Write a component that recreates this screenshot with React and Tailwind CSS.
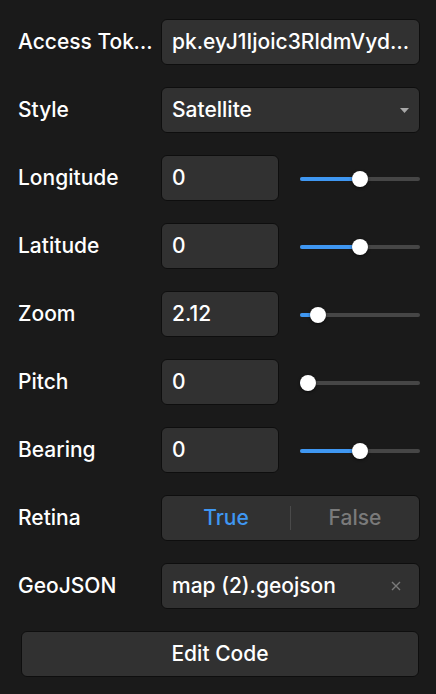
import React from "react";

const box =
  "h-[46px] rounded-[6px] border border-[#0e0e0e] bg-[#313131] text-white";

const Slider = ({ pct }) => (
  <div className="relative h-[46px] flex-1">
    <div className="absolute left-0 right-0 top-[22px] h-[4px] rounded-full bg-[#464646]" />
    <div
      className="absolute left-0 top-[22px] h-[4px] rounded-full bg-[#3f97f2]"
      style={{ width: `calc(8px + (100% - 16px) * ${pct / 100})` }}
    />
    <div
      className="absolute top-[16px] h-[16px] w-[16px] rounded-full bg-white shadow-[0_1px_3px_rgba(0,0,0,0.6)]"
      style={{ left: `calc((100% - 16px) * ${pct / 100})` }}
    />
  </div>
);

const Row = ({ label, children }) => (
  <div className="flex items-center">
    <div className="w-[143px] shrink-0 truncate pr-[6px] text-[21px] font-medium text-white">
      {label}
    </div>
    <div className="flex min-w-0 flex-1 items-center">{children}</div>
  </div>
);

const NumberRow = ({ label, value, pct }) => (
  <Row label={label}>
    <div className={`${box} flex w-[118px] shrink-0 items-center px-[10px] text-[21px] font-medium`}>
      {value}
    </div>
    <div className="w-[21px] shrink-0" />
    <Slider pct={pct} />
  </Row>
);

export default function App() {
  return (
    <div
      className="min-h-[694px] w-[436px] bg-[#1a1a1a] pl-[18px] pr-[16px] pt-[19px]"
      style={{ fontFamily: "Inter, 'Noto Sans', sans-serif" }}
    >
      <div className="flex flex-col gap-[22px]">
        <Row label="Access Token">
          <div className={`${box} flex w-full min-w-0 items-center pl-[10px] pr-[8px] text-[21px] font-medium`}>
            <span className="truncate">
              pk.eyJ1Ijoic3RldmVyd2Fsa2VyIiwiYSI6ImNqd2RmZmQ
            </span>
          </div>
        </Row>
        <Row label="Style">
          <div className={`${box} flex w-full items-center justify-between pl-[10px] pr-[10px] text-[21px] font-medium`}>
            <span>Satellite</span>
            <svg width="9" height="5" viewBox="0 0 9 5">
              <path d="M0 0 L9 0 L4.5 5 Z" fill="#a8a8a8" />
            </svg>
          </div>
        </Row>
        <NumberRow label="Longitude" value="0" pct={50} />
        <NumberRow label="Latitude" value="0" pct={50} />
        <NumberRow label="Zoom" value="2.12" pct={9.6} />
        <NumberRow label="Pitch" value="0" pct={0} />
        <NumberRow label="Bearing" value="0" pct={50} />
        <Row label="Retina">
          <div className={`${box} flex w-full items-center text-[21px] font-medium`}>
            <div className="flex-1 text-center text-[#3f97f2]">True</div>
            <div className="h-[24px] w-px bg-[#4a4a4a]" />
            <div className="flex-1 text-center text-[#7a7a7a]">False</div>
          </div>
        </Row>
        <Row label="GeoJSON">
          <div className={`${box} flex w-full items-center justify-between pl-[10px] pr-[18px] text-[21px] font-medium`}>
            <span>map (2).geojson</span>
            <svg width="10" height="10" viewBox="0 0 10 10">
              <path d="M1 1 L9 9 M9 1 L1 9" stroke="#7a7a7a" strokeWidth="1.4" />
            </svg>
          </div>
        </Row>
        <button
          className={`${box} ml-[3px] flex w-[398px] items-center justify-center text-[21px] font-medium`}
        >
          Edit Code
        </button>
      </div>
    </div>
  );
}
